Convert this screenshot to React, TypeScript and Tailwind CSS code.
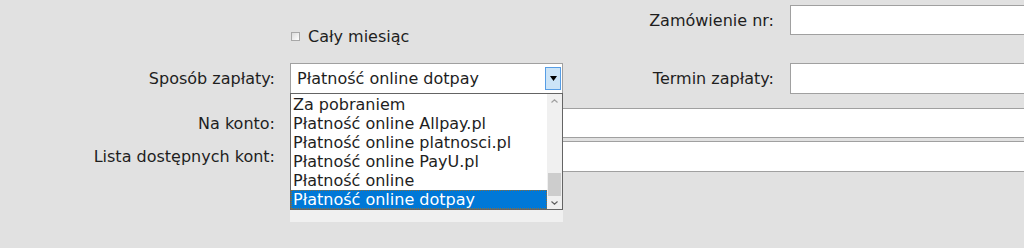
import React from 'react';

const options = [
  'Za pobraniem',
  'Płatność online Allpay.pl',
  'Płatność online platnosci.pl',
  'Płatność online PayU.pl',
  'Płatność online',
  'Płatność online dotpay',
];

const TextInput: React.FC<{ className?: string }> = ({ className = '' }) => (
  <div className={`bg-white border border-[#a0a0a0] shrink-0 ${className}`} />
);

const App: React.FC = () => {
  return (
    <div
      className="relative w-[1024px] h-[248px] overflow-hidden bg-[#e1e1e1] text-[16px] leading-[19px] text-[#1e1e1e]"
      style={{ fontFamily: '"DejaVu Sans", Verdana, sans-serif' }}
    >
      <div className="flex">
        {/* left column */}
        <div className="w-[563px] shrink-0">
          <div className="mt-[27px] h-[18px] flex items-center pl-[291px]">
            <div className="w-[9px] h-[9px] border border-[#a8a8a8] bg-gradient-to-br from-[#dcdcdc] to-white" />
            <span className="ml-[8px]">Cały miesiąc</span>
          </div>
          <div className="mt-[18px] flex items-center">
            <div className="w-[275px] shrink-0 text-right">Sposób zapłaty:</div>
            <div className="ml-[15px] w-[273px] h-[31px] bg-white border border-[#a0a0a0] flex items-center justify-between pl-[6px] pr-[1px]">
              <span>Płatność online dotpay</span>
              <div className="w-[16px] h-[23px] bg-[#cce4f7] border border-[#569de5] flex items-center justify-center">
                <svg width="7" height="5" viewBox="0 0 7 5">
                  <path d="M0 0h7L3.5 5z" fill="#000" />
                </svg>
              </div>
            </div>
          </div>
        </div>

        {/* right column */}
        <div className="flex-1">
          <div className="mt-[5px] flex items-center">
            <div className="w-[211px] shrink-0 text-right">Zamówienie nr:</div>
            <TextInput className="ml-[16px] w-[260px] h-[30px]" />
          </div>
          <div className="mt-[28px] flex items-center">
            <div className="w-[211px] shrink-0 text-right">Termin zapłaty:</div>
            <TextInput className="ml-[16px] w-[260px] h-[31px]" />
          </div>
        </div>
      </div>

      <div className="mt-[14px] flex items-center">
        <div className="w-[275px] shrink-0 text-right">Na konto:</div>
        <TextInput className="ml-[15px] w-[760px] h-[30px]" />
      </div>
      <div className="mt-[3px] flex items-center">
        <div className="w-[275px] shrink-0 text-right">Lista dostępnych kont:</div>
        <TextInput className="ml-[15px] w-[760px] h-[31px]" />
      </div>

      {/* open dropdown list */}
      <div className="absolute left-[290px] top-[93px] w-[273px] bg-[#f0f0f0] pb-[12px]">
        <div className="flex bg-white border border-[#646464]">
          <div className="flex-1 pl-[2px] pt-[1px]">
            {options.map((o, i) =>
              i === options.length - 1 ? (
                <div
                  key={o}
                  className="h-[19px] bg-[#0078d7] text-white outline-1 outline-dotted outline-[#8a6d3b] -outline-offset-1 -ml-[2px] pl-[2px]"
                >
                  {o}
                </div>
              ) : (
                <div key={o} className="h-[19px] whitespace-nowrap">
                  {o}
                </div>
              )
            )}
          </div>
          <div className="w-[15px] bg-[#f0f0f0] flex flex-col items-center">
            <div className="h-[14px] flex items-center justify-center">
              <svg width="7" height="4" viewBox="0 0 7 4">
                <path d="M0.5 3.5L3.5 0.8L6.5 3.5" stroke="#a0a0a0" strokeWidth="1.2" fill="none" />
              </svg>
            </div>
            <div className="flex-1" />
            <div className="w-[13px] h-[23px] bg-[#cdcdcd]" />
            <div className="h-[13px] flex items-center justify-center">
              <svg width="7" height="4" viewBox="0 0 7 4">
                <path d="M0.5 0.5L3.5 3.2L6.5 0.5" stroke="#606060" strokeWidth="1.2" fill="none" />
              </svg>
            </div>
          </div>
        </div>
      </div>
    </div>
  );
};

export default App;
